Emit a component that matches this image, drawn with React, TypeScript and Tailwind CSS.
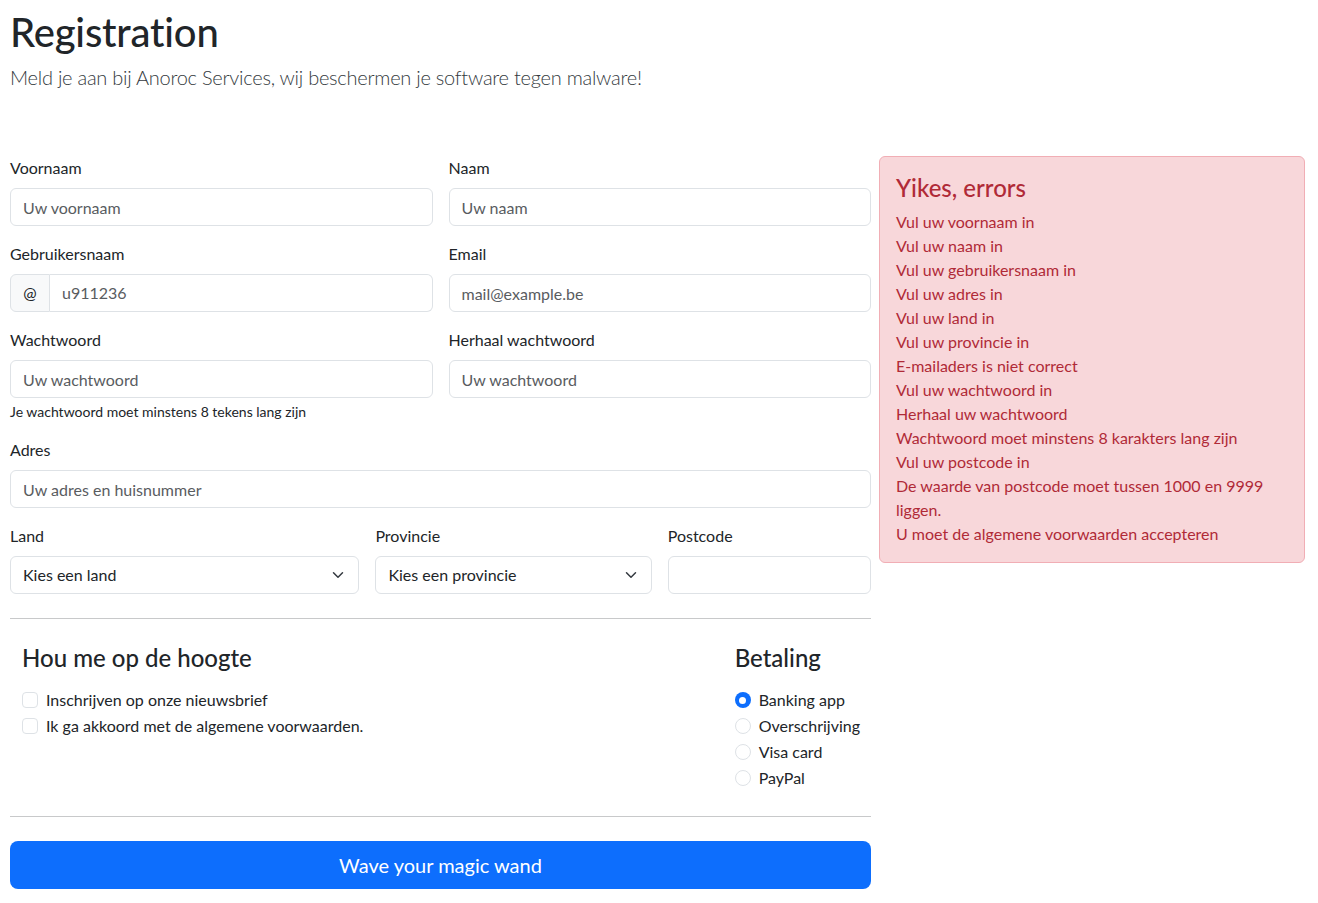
const errors = [
  'Vul uw voornaam in',
  'Vul uw naam in',
  'Vul uw gebruikersnaam in',
  'Vul uw adres in',
  'Vul uw land in',
  'Vul uw provincie in',
  'E-mailaders is niet correct',
  'Vul uw wachtwoord in',
  'Herhaal uw wachtwoord',
  'Wachtwoord moet minstens 8 karakters lang zijn',
  'Vul uw postcode in',
  'De waarde van postcode moet tussen 1000 en 9999 liggen.',
  'U moet de algemene voorwaarden accepteren',
];

const payments = ['Banking app', 'Overschrijving', 'Visa card', 'PayPal'];

function Label({ children }: { children: React.ReactNode }) {
  return <label className="block mb-2 text-base leading-6">{children}</label>;
}

function Input({ placeholder }: { placeholder?: string }) {
  return (
    <input
      placeholder={placeholder}
      className="block w-full h-[38px] px-3 border border-[#dee2e6] rounded-[6px] bg-white text-base text-[#212529] placeholder:text-[#595c5f] outline-none"
    />
  );
}

function Select({ value }: { value: string }) {
  return (
    <div className="flex items-center justify-between h-[38px] pl-3 pr-3 border border-[#dee2e6] rounded-[6px] bg-white">
      <span>{value}</span>
      <svg width="16" height="12" viewBox="0 0 16 16" fill="none">
        <path d="m2 5 6 6 6-6" stroke="#343a40" strokeWidth="2" strokeLinecap="round" strokeLinejoin="round" />
      </svg>
    </div>
  );
}

export default function App() {
  return (
    <div className="min-h-screen bg-white text-[#212529] font-['Lato',sans-serif] px-[10px] pt-[8px] pb-4">
      <h1 className="text-[40px] leading-[48px] font-medium tracking-[-0.2px] mb-[6px]">Registration</h1>
      <p className="text-xl leading-[30px] font-light tracking-[-0.25px] text-[#343a40]">
        Meld je aan bij Anoroc Services, wij beschermen je software tegen malware!
      </p>

      <div className="grid grid-cols-[861px_426px] gap-x-2 mt-[64px]">
        <form>
          <div className="grid grid-cols-2 gap-x-4 gap-y-4">
            <div>
              <Label>Voornaam</Label>
              <Input placeholder="Uw voornaam" />
            </div>
            <div>
              <Label>Naam</Label>
              <Input placeholder="Uw naam" />
            </div>
            <div>
              <Label>Gebruikersnaam</Label>
              <div className="flex h-[38px]">
                <span className="flex items-center justify-center w-10 border border-[#dee2e6] rounded-l-[6px] bg-[#f8f9fa]">@</span>
                <input
                  placeholder="u911236"
                  className="flex-1 min-w-0 px-3 border border-l-0 border-[#dee2e6] rounded-r-[6px] text-base placeholder:text-[#595c5f] outline-none"
                />
              </div>
            </div>
            <div>
              <Label>Email</Label>
              <Input placeholder="mail@example.be" />
            </div>
            <div>
              <Label>Wachtwoord</Label>
              <Input placeholder="Uw wachtwoord" />
              <div className="mt-1 text-sm leading-5">Je wachtwoord moet minstens 8 tekens lang zijn</div>
            </div>
            <div>
              <Label>Herhaal wachtwoord</Label>
              <Input placeholder="Uw wachtwoord" />
            </div>
            <div className="col-span-2">
              <Label>Adres</Label>
              <Input placeholder="Uw adres en huisnummer" />
            </div>
          </div>

          <div className="grid grid-cols-12 gap-x-4 mt-4">
            <div className="col-span-5">
              <Label>Land</Label>
              <Select value="Kies een land" />
            </div>
            <div className="col-span-4">
              <Label>Provincie</Label>
              <Select value="Kies een provincie" />
            </div>
            <div className="col-span-3">
              <Label>Postcode</Label>
              <Input />
            </div>
          </div>

          <hr className="my-6 border-t border-[#c8c9ca]" />

          <div className="flex justify-between pl-3 pr-[11px]">
            <div>
              <h4 className="text-2xl leading-[29px] font-medium mb-4">Hou me op de hoogte</h4>
              {['Inschrijven op onze nieuwsbrief', 'Ik ga akkoord met de algemene voorwaarden.'].map((t) => (
                <div key={t} className="flex mb-[2px] leading-6">
                  <span className="w-4 h-4 mt-1 mr-2 border border-[#dee2e6] rounded-[4px] bg-white" />
                  <span>{t}</span>
                </div>
              ))}
            </div>
            <div>
              <h4 className="text-2xl leading-[29px] font-medium mb-4">Betaling</h4>
              {payments.map((p, i) => (
                <div key={p} className="flex mb-[2px] leading-6">
                  {i === 0 ? (
                    <span className="flex items-center justify-center w-4 h-4 mt-1 mr-2 rounded-full bg-[#0d6efd]">
                      <span className="w-[7px] h-[7px] rounded-full bg-white" />
                    </span>
                  ) : (
                    <span className="w-4 h-4 mt-1 mr-2 border border-[#dee2e6] rounded-full bg-white" />
                  )}
                  <span>{p}</span>
                </div>
              ))}
            </div>
          </div>

          <hr className="my-6 border-t border-[#c8c9ca]" />

          <button type="button" className="w-full h-12 rounded-lg bg-[#0d6efd] text-white text-xl">
            Wave your magic wand
          </button>
        </form>

        <div className="self-start p-4 border border-[#f1aeb5] rounded-[6px] bg-[#f8d7da] text-[#b02a37]">
          <h4 className="text-2xl leading-[29px] font-medium mb-2">Yikes, errors</h4>
          <ul>
            {errors.map((e) => (
              <li key={e} className="leading-6">{e}</li>
            ))}
          </ul>
        </div>
      </div>
    </div>
  );
}
